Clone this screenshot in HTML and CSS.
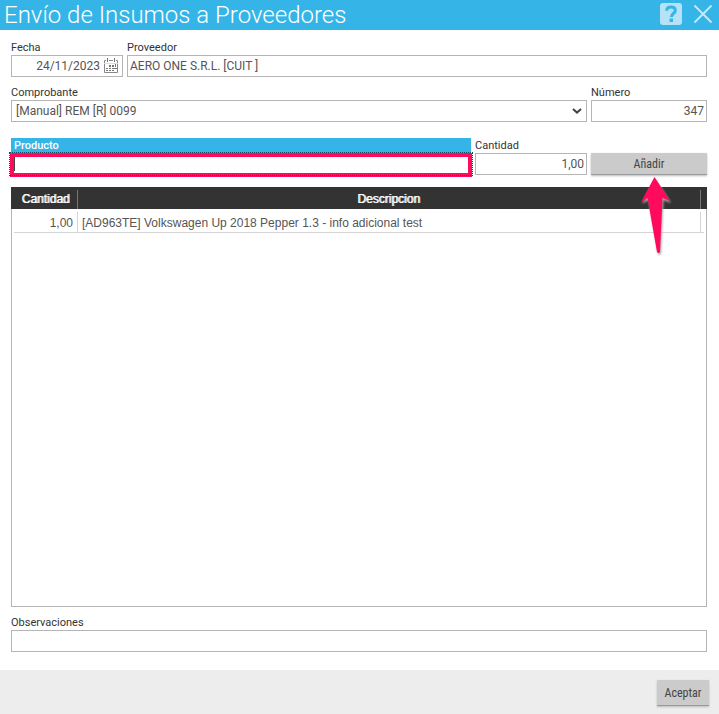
FILE: index.html
```html
<!DOCTYPE html>
<html lang="es">
<head>
<meta charset="utf-8">
<title>Envío de Insumos a Proveedores</title>
<link rel="stylesheet" href="styles.css">
</head>
<body>
<header class="titlebar">
  <h1>Envío de Insumos a Proveedores</h1>
  <button class="icon-btn" type="button" aria-label="Ayuda">
    <svg width="22" height="22" viewBox="0 0 22 22"><rect width="22" height="22" rx="3" fill="#b5e2f6"/><path d="M6.700 7.700C6.800 4.900 8.700 3.900 11 3.900c2.600 0 4.300 1.300 4.300 3.500 0 3.100-3.900 3.100-3.900 6.500" fill="none" stroke="#35b5e7" stroke-width="3"/><rect x="9.500" y="15.500" width="3.500" height="3.500" fill="#35b5e7"/></svg>
  </button>
  <button class="icon-btn" type="button" aria-label="Cerrar">
    <svg width="20" height="20" viewBox="0 0 20 20"><path d="M1.500 1.500l17 17M18.500 1.500l-17 17" fill="none" stroke="#c8eafa" stroke-width="1.800"/></svg>
  </button>
</header>
<main class="form">
  <div class="row">
    <div class="field small">
      <label for="fecha">Fecha</label>
      <div class="date">
        <input id="fecha" class="num" type="text" value="24/11/2023">
        <button class="icon-btn calendar" type="button" aria-label="Calendario">
          <svg width="16" height="16" viewBox="0 0 16 16"><path d="M3 2.500H1.500v12h13v-12H13M6 2.500h4" fill="none" stroke="#888"/><path d="M1 5.500h14" stroke="#ddd"/><path d="M4.500 0v4M11.500 0v4" stroke="#777"/><path d="M6 7h2v2H6zM9 7h2v2H9zM12 6h1v3h-1zM3 10h2v1H3zM6 10h2v1H6zM9 10h5v1H9zM3 12h2v1H3zM6 12h2v1H6zM9 12h2v1H9z" fill="#777"/></svg>
        </button>
      </div>
    </div>
    <div class="field grow">
      <label for="proveedor">Proveedor</label>
      <input id="proveedor" type="text" value="AERO ONE S.R.L. [CUIT ]">
    </div>
  </div>
  <div class="row">
    <div class="field grow">
      <label for="comprobante">Comprobante</label>
      <div class="select">
        <select id="comprobante"><option>[Manual] REM [R] 0099</option></select>
        <svg class="chevron" width="10" height="6" viewBox="0 0 10 6"><path d="M1 1l4 3.600L9 1" fill="none" stroke="#444" stroke-width="2"/></svg>
      </div>
    </div>
    <div class="field medium">
      <label for="numero">Número</label>
      <input id="numero" class="num" type="text" value="347">
    </div>
  </div>
  <div class="row entry">
    <div class="field grow active">
      <label for="producto">Producto</label>
      <div class="focus"><input id="producto" type="text"><span class="caret"></span></div>
    </div>
    <div class="field small">
      <label for="cantidad">Cantidad</label>
      <input id="cantidad" class="num" type="text" value="1,00">
    </div>
    <div class="add medium">
      <button class="btn" type="button">Añadir</button>
      <svg class="arrow" width="34" height="82" viewBox="0 0 34 82"><path d="M15.500 1L31 25l-7.500-3L21 76q-1.500 2-3 0L8.500 22 2 26z" fill="#ff0a5c"/></svg>
    </div>
  </div>
  <div class="grid">
    <table>
      <thead><tr><th class="qty" scope="col"><span>Cantidad</span></th><th scope="col"><span>Descripcion</span></th><th class="end"></th></tr></thead>
      <tbody><tr><td class="qty"><span>1,00</span></td><td><span>[AD963TE] Volkswagen Up 2018 Pepper 1.3 - info adicional test</span></td><td class="end"></td></tr></tbody>
    </table>
  </div>
  <div class="field">
    <label for="obs">Observaciones</label>
    <input id="obs" type="text">
  </div>
</main>
<footer class="actions"><button class="btn accept" type="button">Aceptar</button></footer>
</body>
</html>
```
FILE: styles.css
```css
* { box-sizing: border-box; }

body {
  margin: 0;
  min-height: 100vh;
  display: flex;
  flex-direction: column;
  background: #fff;
  color: #555;
  font: 12px/20px Roboto, sans-serif;
}

.titlebar {
  display: flex;
  align-items: center;
  gap: 11px;
  height: 30px;
  padding: 0 6px 2px 4px;
  background: #35b5e7;
  color: #fff;
}

h1 {
  flex: 1;
  margin: 0;
  font-size: 24px;
  line-height: 30px;
  font-weight: 300;
  align-self: flex-start;
}

.icon-btn {
  display: flex;
  padding: 0;
  border: 0;
  background: none;
}

.form {
  flex: 1;
  display: flex;
  flex-direction: column;
  gap: 8px;
  padding: 10px 12px 18px 11px;
}

.row { display: flex; gap: 4px; }
.entry { margin-top: 8px; }

.field { display: flex; flex-direction: column; }
.grow { flex: 1; min-width: 0; }
.small { width: 112px; }
.medium { width: 116px; }

label {
  height: 15px;
  font-size: 11px;
  line-height: 15px;
  color: #333;
}

input,
select {
  width: 100%;
  height: 22px;
  padding: 0 2px;
  border: 1px solid #b5b5b5;
  border-radius: 0;
  background: #fff;
  color: #555;
  font: 12px/20px Roboto, sans-serif;
  outline: 0;
}

.num { text-align: right; }

.date,
.select,
.add { position: relative; }

.date input { padding-right: 22px; }
.calendar { position: absolute; right: 4px; top: 3px; }

select { appearance: none; padding-left: 4px; }
.chevron { position: absolute; right: 5px; top: 8px; pointer-events: none; }

.active label {
  padding-left: 3px;
  background: #35b5e7;
  color: #fff;
  font-weight: 500;
  line-height: 16px;
}

.focus {
  position: relative;
  height: 22px;
  margin: 0 -1px;
  outline: 1px dotted #174a60;
}

.focus input { height: 24px; border: 4px solid #ff0a5c; }
.caret { position: absolute; left: 4px; top: 4px; width: 1px; height: 14px; background: #444; }

.add { padding-top: 15px; }

.btn {
  width: 100%;
  height: 22px;
  padding: 0;
  border: 0;
  border-bottom: 1px solid #999;
  background: #cbcbcb;
  color: #444;
  font: 12px/20px "Roboto Condensed", Roboto, sans-serif;
  box-shadow: 0 1px 2px #bbb;
}

.arrow {
  position: absolute;
  left: 48px;
  top: 38px;
  filter: drop-shadow(1px 2px 1px #aaa);
  pointer-events: none;
}

.grid {
  flex: 1;
  margin-top: 4px;
  border: 1px solid #b5b5b5;
  border-top: 0;
}

table {
  width: calc(100% + 2px);
  margin: 0 -1px;
  border-collapse: collapse;
  table-layout: fixed;
  font: 12px/20px "Liberation Sans", Arial, sans-serif;
}

th,
td { padding: 3px 0 0; height: 22px; }

th {
  background: #333;
  color: #fff;
  font-weight: 400;
  text-shadow: 1px 0 0 #ddd;
}

th span,
td span,
.end::before {
  display: block;
  height: 19px;
  line-height: 18px;
  border-right: 1px solid #777;
}

th.end,
td.end { width: 8px; }
th:nth-child(2) span { border: 0; }
th.qty { width: 67px; }
th.qty span { padding-left: 3px; }

.end::before { content: ""; width: 1px; }

td {
  height: 24px;
  background: linear-gradient(#d5d5d5, #d5d5d5) right bottom / 100% 1px no-repeat;
}

td span,
td.end::before { height: 21px; line-height: 22px; border-color: #d5d5d5; }
td:nth-child(2) span { border: 0; padding-left: 4px; }
td.qty { background-size: calc(100% - 3px) 1px; text-align: right; }
td.qty span { padding-right: 4px; }
td.end { background-size: calc(100% - 3px) 1px; background-position: left bottom; }

.actions {
  display: flex;
  justify-content: flex-end;
  height: 44px;
  padding: 10px;
  background: #ededed;
}

.accept { width: 52px; height: 26px; }
```
